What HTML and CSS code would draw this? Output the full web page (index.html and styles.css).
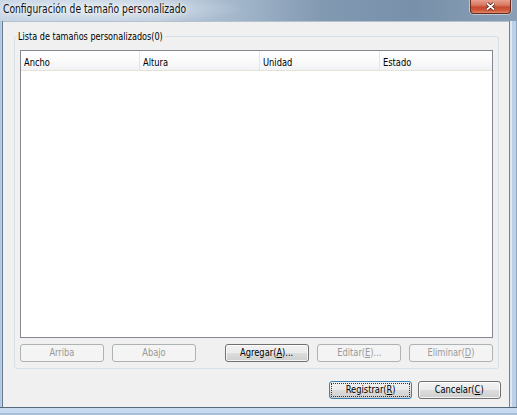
FILE: index.html
```html
<!DOCTYPE html>
<html>
<head>
<meta charset="utf-8">
<link rel="stylesheet" href="styles.css">
</head>
<body>
<div class="window">
  <div class="titlebar">
    <span class="title">Configuración de tamaño personalizado</span>
    <div class="close">
      <svg width="11" height="9" viewBox="0 0 11 9">
        <path d="M2 1.5 L9 7.5 M9 1.5 L2 7.5" stroke="#4a1a12" stroke-width="3.4" fill="none"/>
        <path d="M2 1.5 L9 7.5 M9 1.5 L2 7.5" stroke="#ffffff" stroke-width="1.7" fill="none"/>
      </svg>
    </div>
  </div>
  <div class="middle">
    <div class="frame-left"></div>
    <div class="client">
      <fieldset class="group">
        <legend><span class="t legend-text">Lista de tamaños personalizados(0)</span></legend>
        <div class="list">
          <div class="list-header">
            <div class="col"><span class="t">Ancho</span></div>
            <div class="col"><span class="t">Altura</span></div>
            <div class="col"><span class="t">Unidad</span></div>
            <div class="col last"><span class="t">Estado</span></div>
          </div>
          <div class="list-body"></div>
        </div>
        <div class="btn-row">
          <button class="btn" disabled><span class="t">Arriba</span></button>
          <button class="btn" disabled><span class="t">Abajo</span></button>
          <button class="btn push"><span class="t">Agregar(<u>A</u>)...</span></button>
          <button class="btn" disabled><span class="t">Editar(<u>E</u>)...</span></button>
          <button class="btn" disabled><span class="t">Eliminar(<u>D</u>)</span></button>
        </div>
      </fieldset>
      <div class="footer">
        <button class="btn default"><span class="focus"><span class="t">Registrar(<u>R</u>)</span></span></button>
        <button class="btn"><span class="t">Cancelar(<u>C</u>)</span></button>
      </div>
    </div>
    <div class="frame-right"></div>
  </div>
  <div class="frame-bottom"></div>
</div>
</body>
</html>
```

FILE: styles.css
```css
html, body {
  margin: 0;
  padding: 0;
}
body {
  width: 517px;
  height: 415px;
  overflow: hidden;
  font-family: "DejaVu Sans Condensed", "DejaVu Sans", sans-serif;
  font-size: 11px;
  color: #000;
}
.t {
  display: inline-block;
  transform: scaleX(0.84);
  white-space: nowrap;
}
.window {
  display: flex;
  flex-direction: column;
  width: 517px;
  height: 415px;
}
.titlebar {
  height: 21px;
  display: flex;
  align-items: flex-start;
  background:
    radial-gradient(ellipse 150px 16px at 95px 9px, rgba(232,239,246,0.85), rgba(232,239,246,0) 100%),
    linear-gradient(90deg, #c3d2e2 0%, #bccbdc 30%, #9fb3c8 48%, #8299b2 62%, #7890aa 80%, #8a9fb6 100%);
}
.title {
  display: inline-block;
  margin: 2px 0 0 3px;
  font-size: 12px;
  line-height: 14px;
  color: #111;
  white-space: nowrap;
  transform: scaleX(0.85);
  transform-origin: left center;
  text-shadow: 0 0 4px rgba(255,255,255,0.9), 0 0 8px rgba(255,255,255,0.7);
}
.close {
  margin-left: auto;
  margin-right: 6px;
  width: 41px;
  height: 14px;
  box-sizing: border-box;
  border: 1px solid #6b2a1f;
  border-top: none;
  border-radius: 0 0 4px 4px;
  background: linear-gradient(#e7a08f 0%, #d8785f 40%, #c74a2f 55%, #cf5a3c 80%, #e08a6c 100%);
  box-shadow: 0 0 0 1px rgba(255,255,255,0.45);
  display: flex;
  align-items: center;
  justify-content: center;
}
.middle {
  display: flex;
  height: 386px;
}
.frame-left {
  width: 3px;
  background: linear-gradient(90deg, #a9c0d9 0, #c4d7eb 2px, #66798e 2px);
}
.client {
  width: 506px;
  box-sizing: border-box;
  border-top: 1px solid #b4c2d0;
  background: #f0f0f0;
  display: flex;
  flex-direction: column;
}
.frame-right {
  width: 8px;
  background: linear-gradient(90deg, #6f8196 0 1px, #dfe8f1 1px 3px, #bcd1e8 3px 7px, #8ea6bf 7px);
}
.frame-bottom {
  height: 8px;
  background: linear-gradient(#56687c 0 1px, #c6d9ee 1px 6px, #a7bed6 6px);
}
.group {
  margin: 8px 10px 0 11px;
  padding: 7px 5px 6px 5px;
  border: 1px solid #d5dfe5;
  border-radius: 3px;
  min-inline-size: 0;
  display: flex;
  flex-direction: column;
}
.group legend {
  padding: 0 2px 0 1px;
  margin-left: -3px;
  line-height: 13px;
  font-size: 11px;
}
.legend-text {
  transform: scaleX(0.82);
  transform-origin: left center;
  margin-right: -32px;
}
.list {
  height: 288px;
  box-sizing: border-box;
  border: 1px solid #828790;
  background: #fff;
  display: flex;
  flex-direction: column;
}
.list-header {
  display: flex;
  height: 20px;
  box-sizing: border-box;
  border-bottom: 1px solid #e5e2d6;
  background: linear-gradient(#ffffff 0%, #fbfbfc 50%, #f1f2f4 100%);
}
.col {
  width: 119px;
  box-sizing: border-box;
  border-right: 1px solid #e3e6ea;
  padding: 5px 0 0 3px;
  line-height: 13px;
}
.col .t {
  transform-origin: left center;
}
.col + .col {
  width: 120px;
}
.col.last {
  flex: 1;
  border-right: none;
}
.list-body {
  flex: 1;
}
.btn-row {
  display: flex;
  gap: 8px;
  margin-top: 6px;
}
.btn {
  width: 84px;
  height: 18px;
  box-sizing: border-box;
  padding: 0;
  margin: 0;
  font-family: inherit;
  font-size: 11px;
  line-height: 14px;
  color: #000;
  border: 1px solid #707070;
  border-radius: 3px;
  background: linear-gradient(#f2f2f2 0%, #ebebeb 50%, #dddddd 51%, #cfcfcf 100%);
  box-shadow: inset 0 0 0 1px rgba(255,255,255,0.75);
  display: flex;
  align-items: center;
  justify-content: center;
}
.btn:disabled {
  color: #999999;
  border-color: #adb2b5;
  background: #f4f4f4;
  box-shadow: none;
}
.btn.push {
  margin-left: auto;
}
.footer {
  display: flex;
  justify-content: flex-end;
  gap: 6px;
  margin: 12px 8px 0 0;
}
.footer .btn {
  width: 83px;
}
.btn.default {
  border-color: #3c7fb1;
  box-shadow: none;
}
.focus {
  display: flex;
  align-items: center;
  justify-content: center;
  box-sizing: border-box;
  width: 79px;
  height: 14px;
  border: 1px dotted #333;
}
```
